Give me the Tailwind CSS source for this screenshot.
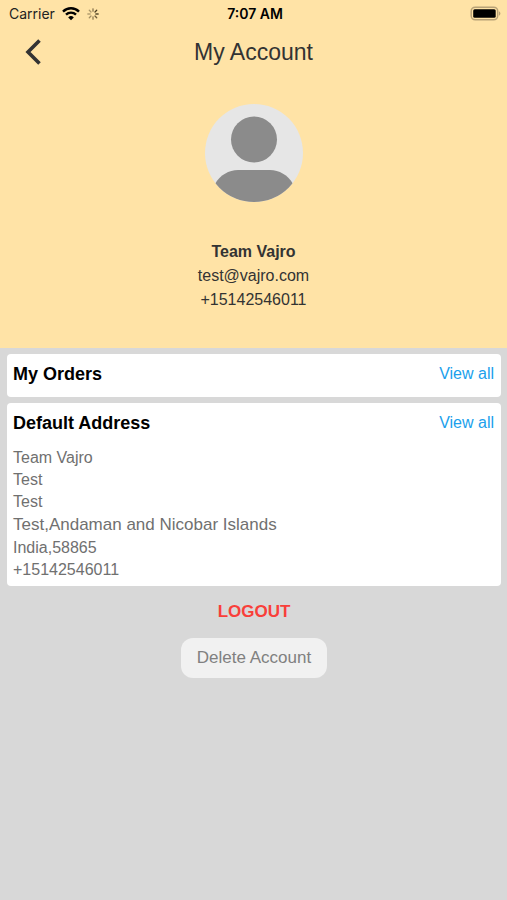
<!DOCTYPE html>
<html lang="en">
<head>
<meta charset="utf-8">
<meta name="viewport" content="width=device-width, initial-scale=1">
<title>My Account</title>
<script src="https://cdn.jsdelivr.net/npm/@tailwindcss/browser@4"></script>
</head>
<body class="min-h-screen bg-[#d8d8d8] font-['Liberation_Sans',Arial,sans-serif] text-base">
<header class="bg-[#ffe3a6] pb-9 text-[#333]">
  <div class="grid h-7 grid-cols-3 items-center pr-[6px] pl-[9px] font-['Inter',sans-serif] text-sm text-black">
    <div class="flex items-center gap-[7px]">
      <span class="text-[#222]">Carrier</span>
      <svg class="h-[14px] w-[18px]" viewBox="0 0 18 14" fill="none" stroke="#000" stroke-width="2.4" aria-hidden="true">
        <path d="M1 4.600a11.400 11.400 0 0 1 16 0"/>
        <path d="M4 7.700a7.100 7.100 0 0 1 10 0"/>
        <path d="M9 13.200 6.200 10.400a4 4 0 0 1 5.600 0Z" fill="#000" stroke="none"/>
      </svg>
      <svg class="h-3 w-3" viewBox="0 0 12 12" stroke="#4a3c20" stroke-width="1.3" stroke-linecap="round" aria-hidden="true">
        <path d="M6 .8v2.4" opacity=".65"/>
        <path d="M9.7 2.3 8 4" opacity="1"/>
        <path d="M11.2 6H8.8" opacity=".9"/>
        <path d="M9.7 9.7 8 8" opacity=".8"/>
        <path d="M6 11.2V8.8" opacity=".6"/>
        <path d="M2.3 9.7 4 8" opacity=".5"/>
        <path d="M.8 6h2.4" opacity=".4"/>
        <path d="M2.3 2.3 4 4" opacity=".45"/>
      </svg>
    </div>
    <span class="text-center font-semibold">7:07 AM</span>
    <svg class="mb-[2px] h-[15px] w-[31px] justify-self-end" viewBox="0 0 31 15" aria-hidden="true">
      <rect x="1.2" y="1.2" width="26.500" height="12.600" rx="4" fill="none" stroke="#b8a277" stroke-width="1.5"/>
      <rect x="3.200" y="3.200" width="22.500" height="8.600" rx="1.500" fill="#000"/>
      <path d="M29 5.300c1.900.8 1.900 3.600 0 4.400Z" fill="#b8a277"/>
    </svg>
  </div>
  <div class="grid h-12 grid-cols-[1fr_auto_1fr] items-center px-6">
    <button type="button" aria-label="Back" class="w-5 cursor-pointer">
      <svg class="h-[26px] w-[18px]" viewBox="0 0 18 26" fill="none" stroke="#333" stroke-width="3.600" aria-hidden="true"><path d="M15.500 1.500 4 13l11.500 11.500"/></svg>
    </button>
    <h1 class="text-[23px] leading-7">My Account</h1>
  </div>
  <svg class="mx-auto mt-7 block size-[98px]" viewBox="0 0 98 98" role="img" aria-label="Profile picture">
    <defs><clipPath id="avatar"><circle cx="49" cy="49" r="49"/></clipPath></defs>
    <g clip-path="url(#avatar)">
      <path d="M0 0h98v98H0Z" fill="#e6e6e6"/>
      <circle cx="49" cy="35.500" r="23" fill="#8b8b8b"/>
      <path d="M10 80C15 71 24 66 33 66h32C74 66 83 71 88 80v18H10Z" fill="#8b8b8b"/>
    </g>
  </svg>
  <div class="mt-[38px] text-center leading-6">
    <p class="font-bold">Team Vajro</p>
    <p>test@vajro.com</p>
    <p>+15142546011</p>
  </div>
</header>
<main class="flex flex-col gap-[6px] py-[6px] pr-[6px] pl-[7px]">
  <section class="flex items-center justify-between rounded bg-white pt-2 pr-[7px] pb-[11px] pl-[6px]">
    <h2 class="text-lg leading-6 font-bold">My Orders</h2>
    <a href="#orders" class="leading-6 text-[#209fec]">View all</a>
  </section>
  <section class="rounded bg-white pt-2 pr-[7px] pb-[5px] pl-[6px]">
    <div class="flex items-center justify-between">
      <h2 class="text-lg leading-6 font-bold">Default Address</h2>
      <a href="#addresses" class="leading-6 text-[#209fec]">View all</a>
    </div>
    <address class="mt-3 leading-[22px] text-[#707070] not-italic">
      <p>Team Vajro</p>
      <p>Test</p>
      <p>Test</p>
      <p class="text-[17px] leading-6">Test,Andaman and Nicobar Islands</p>
      <p>India,58865</p>
      <p>+15142546011</p>
    </address>
  </section>
  <div class="mt-2 flex flex-col items-center gap-[14px]">
    <button type="button" class="cursor-pointer text-[17px] leading-6 font-bold text-[#f93f3a]">LOGOUT</button>
    <button type="button" class="h-10 cursor-pointer rounded-xl bg-[#f1f1f1] px-4 text-[17px] text-[#808080]">Delete Account</button>
  </div>
</main>
</body>
</html>
